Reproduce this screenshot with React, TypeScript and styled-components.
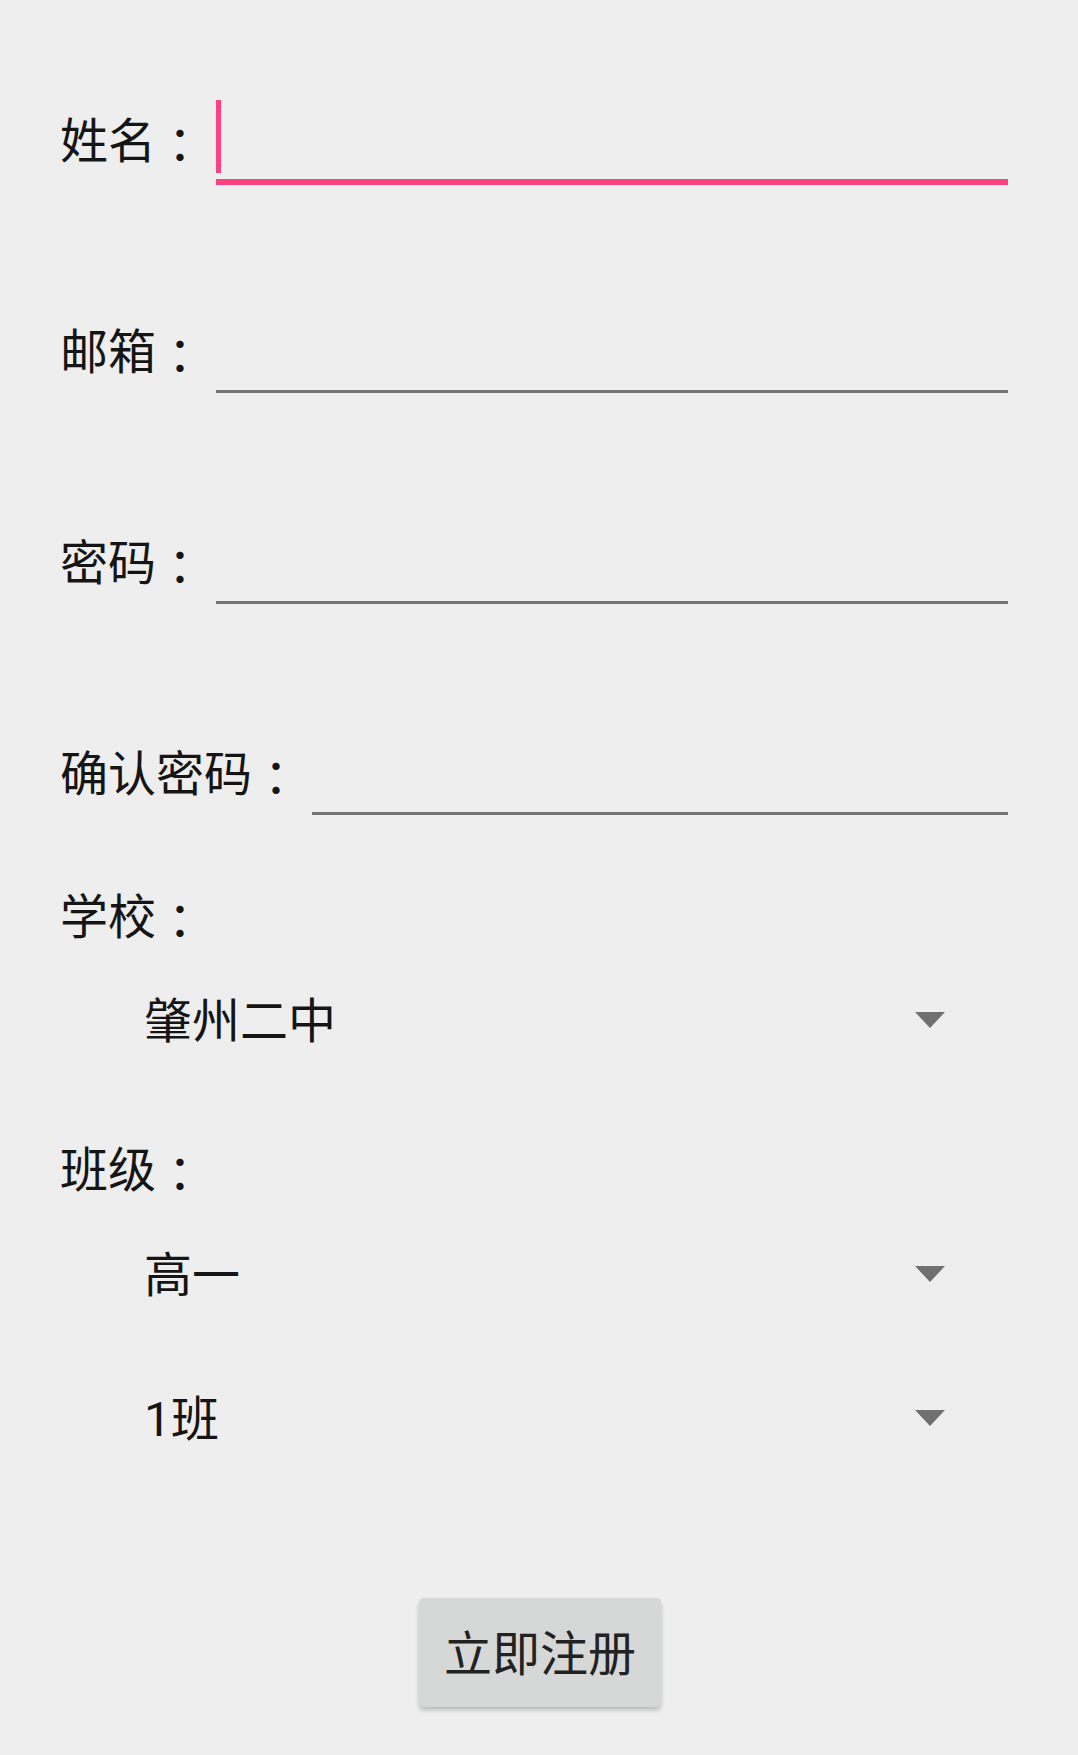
import React from 'react';
import styled, { createGlobalStyle } from 'styled-components';

const GlobalStyle = createGlobalStyle`
  html, body {
    margin: 0;
    padding: 0;
    background: #eeeeee;
  }
  body {
    font-family: Roboto, "Noto Sans CJK SC", sans-serif;
    color: #151515;
  }
`;

const Page = styled.div`
  min-height: 1755px;
  box-sizing: border-box;
  padding: 98px 70px 0 60px;
  display: flex;
  flex-direction: column;
  font-size: 48px;
`;

const Fields = styled.div`
  display: flex;
  flex-direction: column;
  gap: 127px;
`;

const TextRow = styled.div`
  display: flex;
  align-items: flex-start;
  gap: 12px;
  height: 84px;
`;

// label text + centred colon; CJK glyphs sit a little high in the line box,
// the top padding puts them on the field's centre line
const Caption = styled.div<{ $height: number }>`
  display: flex;
  align-items: center;
  box-sizing: border-box;
  height: ${({ $height }) => $height}px;
  padding-top: 4px;
  line-height: 1;
  white-space: nowrap;
`;

const Colon = styled.span`
  width: 1em;
  text-align: center;
  font-family: "Noto Sans CJK JP", sans-serif;
`;

const Field = styled.div<{ $focused?: boolean }>`
  flex: 1;
  box-sizing: border-box;
  height: ${({ $focused }) => ($focused ? '87px' : '84px')};
  border-bottom: ${({ $focused }) => ($focused ? '6px solid #ff4081' : '3px solid #757575')};
  display: flex;
  align-items: flex-start;
`;

const Caret = styled.span`
  display: block;
  width: 5px;
  height: 73px;
  margin-top: 2px;
  background: #ff4081;
`;

const Section = styled.div`
  margin-top: 69px;
`;

const Spinner = styled.div<{ $gap: number }>`
  display: flex;
  align-items: center;
  justify-content: space-between;
  box-sizing: border-box;
  height: 96px;
  margin-top: ${({ $gap }) => $gap}px;
  padding: 0 63px 0 84px;
`;

const SpinnerText = styled.span`
  line-height: 1;
  padding-top: 4px;
`;

const Arrow = styled.svg`
  width: 30px;
  height: 16px;
  display: block;
`;

const Register = styled.button`
  align-self: center;
  margin: 132px 0 0 12px;
  width: 242px;
  height: 109px;
  border: 0;
  border-radius: 5px;
  background: #d6d7d7;
  box-shadow: 0 3px 4px rgba(0, 0, 0, 0.22);
  font-family: inherit;
  font-size: 48px;
  line-height: 1;
  color: #222;
  padding: 4px 0 0;
  cursor: pointer;
`;

function DropArrow() {
  return (
    <Arrow viewBox="0 0 30 16">
      <polygon points="0,0 30,0 15,16" fill="#707070" />
    </Arrow>
  );
}

function LabelText({ text, height }: { text: string; height: number }) {
  return (
    <Caption $height={height}>
      <span>{text}</span>
      <Colon>：</Colon>
    </Caption>
  );
}

const fields = [
  { label: '姓名', focused: true },
  { label: '邮箱' },
  { label: '密码' },
  { label: '确认密码' },
];

export default function App() {
  return (
    <>
      <GlobalStyle />
      <Page>
        <Fields>
          {fields.map(f => (
            <TextRow key={f.label}>
              <LabelText text={f.label} height={84} />
              <Field $focused={f.focused}>{f.focused && <Caret />}</Field>
            </TextRow>
          ))}
        </Fields>

        <Section>
          <LabelText text="学校" height={64} />
          <Spinner $gap={24}>
            <SpinnerText>肇州二中</SpinnerText>
            <DropArrow />
          </Spinner>
        </Section>

        <Section>
          <LabelText text="班级" height={64} />
          <Spinner $gap={25}>
            <SpinnerText>高一</SpinnerText>
            <DropArrow />
          </Spinner>
          <Spinner $gap={48}>
            <SpinnerText>1班</SpinnerText>
            <DropArrow />
          </Spinner>
        </Section>

        <Register>立即注册</Register>
      </Page>
    </>
  );
}
